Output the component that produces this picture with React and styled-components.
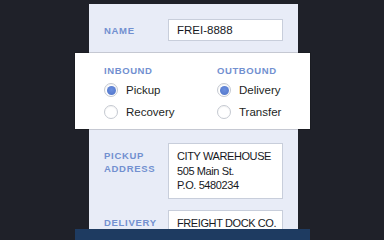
import React from 'react';
import styled, { createGlobalStyle } from 'styled-components';

const GlobalStyle = createGlobalStyle`
  html, body {
    margin: 0;
    padding: 0;
    background: #1f2129;
  }
  body {
    font-family: "Liberation Sans", Arial, sans-serif;
    width: 384px;
    height: 240px;
    overflow: hidden;
  }
`;

const Page = styled.div`
  display: flex;
  justify-content: center;
  padding-top: 4px;
  height: 240px;
  box-sizing: border-box;
`;

const Stack = styled.div`
  display: flex;
  flex-direction: column;
  width: 235px;
  margin-left: 1px;
`;

const CardPart = styled.div`
  background: #e8ecf7;
  margin: 0 12px 0 14px;
  padding: ${(p) => p.$pad};
  height: ${(p) => p.$height || 'auto'};
  box-sizing: border-box;
  overflow: hidden;
  display: flex;
  flex-direction: column;
  gap: 11px;
`;

const Row = styled.div`
  display: flex;
  align-items: ${(p) => (p.$center ? 'center' : 'flex-start')};
`;

const FieldLabel = styled.div`
  width: 64px;
  flex-shrink: 0;
  padding-top: ${(p) => (p.$center ? '0' : '6px')};
  font-size: 9.5px;
  font-weight: 700;
  letter-spacing: 0.7px;
  line-height: 13px;
  color: #7290d0;
`;

const Box = styled.div`
  width: 115px;
  box-sizing: border-box;
  background: #fff;
  border: 1px solid #c8cedb;
  padding: ${(p) => (p.$tight ? '3px 8px' : '5px 8px')};
  font-size: ${(p) => (p.$caps ? '11px' : '11.5px')};
  line-height: ${(p) => (p.$tight ? '14px' : '14.5px')};
  color: #17191e;
  white-space: nowrap;
  letter-spacing: ${(p) => (p.$caps ? '-0.4px' : '0')};
`;

const Popup = styled.div`
  background: #fff;
  padding: 12px 20px 6px 29px;
  display: grid;
  grid-template-columns: 113px 1fr;
  box-shadow: 0 0 0 1px rgba(0, 0, 0, 0.15);
  position: relative;
  z-index: 1;
`;

const Group = styled.div`
  display: flex;
  flex-direction: column;
`;

const GroupTitle = styled.div`
  font-size: 9.5px;
  font-weight: 700;
  letter-spacing: 0.6px;
  line-height: 11px;
  color: #7290d0;
  margin-bottom: 3px;
`;

const Option = styled.label`
  display: flex;
  align-items: center;
  gap: 8px;
  height: 22px;
  font-size: 11.5px;
  color: #1d1f24;
`;

const Radio = styled.span`
  width: 14px;
  height: 14px;
  box-sizing: border-box;
  border-radius: 50%;
  border: 1px solid #c5c9d1;
  background: #fff;
  display: flex;
  align-items: center;
  justify-content: center;
  box-shadow: inset 0 1px 1px rgba(0, 0, 0, 0.05);

  &::after {
    content: '';
    width: 9px;
    height: 9px;
    border-radius: 50%;
    background: radial-gradient(circle at 50% 40%, #6b8fe0, #4f73c6);
    display: ${(p) => (p.$checked ? 'block' : 'none')};
  }
`;

const Bar = styled.div`
  flex: 1;
  background: #1e3b61;
`;

const groups = [
  { title: 'INBOUND', options: [['Pickup', true], ['Recovery', false]] },
  { title: 'OUTBOUND', options: [['Delivery', true], ['Transfer', false]] },
];

export default function App() {
  return (
    <>
      <GlobalStyle />
      <Page>
        <Stack>
          <CardPart $pad="15px 14px 12px 15px">
            <Row $center>
              <FieldLabel $center>NAME</FieldLabel>
              <Box $tight>FREI-8888</Box>
            </Row>
          </CardPart>
          <Popup>
            {groups.map((g) => (
              <Group key={g.title}>
                <GroupTitle>{g.title}</GroupTitle>
                {g.options.map(([name, checked]) => (
                  <Option key={name}>
                    <Radio $checked={checked} />
                    {name}
                  </Option>
                ))}
              </Group>
            ))}
          </Popup>
          <CardPart $pad="14px 14px 0 15px" $height="100px">
            <Row>
              <FieldLabel>PICKUP<br />ADDRESS</FieldLabel>
              <Box $caps>
                CITY WAREHOUSE<br />
                505 Main St.<br />
                P.O. 5480234
              </Box>
            </Row>
            <Row>
              <FieldLabel>DELIVERY</FieldLabel>
              <Box $caps>FREIGHT DOCK CO.</Box>
            </Row>
          </CardPart>
          <Bar />
        </Stack>
      </Page>
    </>
  );
}
